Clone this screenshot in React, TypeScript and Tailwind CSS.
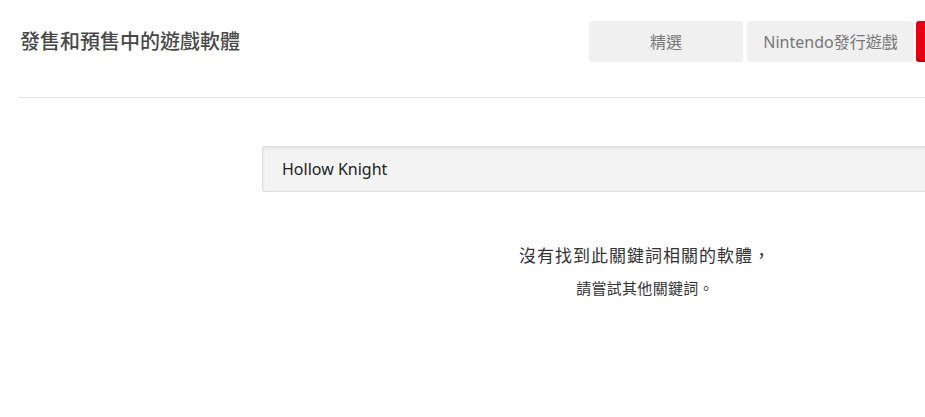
const FONT = "font-['Noto_Sans','Noto_Sans_CJK_TC',sans-serif]";

const tabs = [
  { label: "精選", width: "w-[154px]" },
  { label: "Nintendo發行遊戲", width: "w-[167px]" },
];

export default function App() {
  return (
    <div className={`h-[417px] w-full overflow-hidden bg-white ${FONT}`}>
      <div className="ml-[18px] w-[1022px]">
        {/* header */}
        <div className="flex items-start pt-[21px] pb-[35px] border-b border-[#e5e5e5]">
          <h1 className="w-[571px] shrink-0 pl-[2px] pt-[8px] text-[20px] leading-[26px] font-medium text-[#484848]">
            發售和預售中的遊戲軟體
          </h1>
          <div className="flex">
            {tabs.map((t) => (
              <div
                key={t.label}
                className={`${t.width} mr-[4px] h-[41px] flex items-center justify-center rounded-[3px] bg-[#f0f0f0] text-[16px] text-[#777777]`}
              >
                {t.label}
              </div>
            ))}
            <div className="-ml-[2px] w-[112px] h-[41px] rounded-[3px] bg-[#e60012] border-b-[3px] border-[#b5000e]" />
          </div>
        </div>

        {/* search + result */}
        <div className="ml-[244px] w-[766px] pt-[48px]">
          <div className="h-[46px] flex items-center pl-[19px] rounded-[2px] bg-[#f3f3f3] border border-[#dedede] shadow-[inset_0_2px_3px_rgba(0,0,0,0.06)] text-[16px] text-[#222222]">
            Hollow Knight
          </div>
          <div className="flex flex-col items-center pt-[51px] text-[#333333]">
            <p className="text-[17px] leading-[26px] tracking-[1px]">沒有找到此關鍵詞相關的軟體，</p>
            <p className="mt-[9px] text-[15px] leading-[20px] tracking-[0.3px]">請嘗試其他關鍵詞。</p>
          </div>
        </div>
      </div>
    </div>
  );
}
